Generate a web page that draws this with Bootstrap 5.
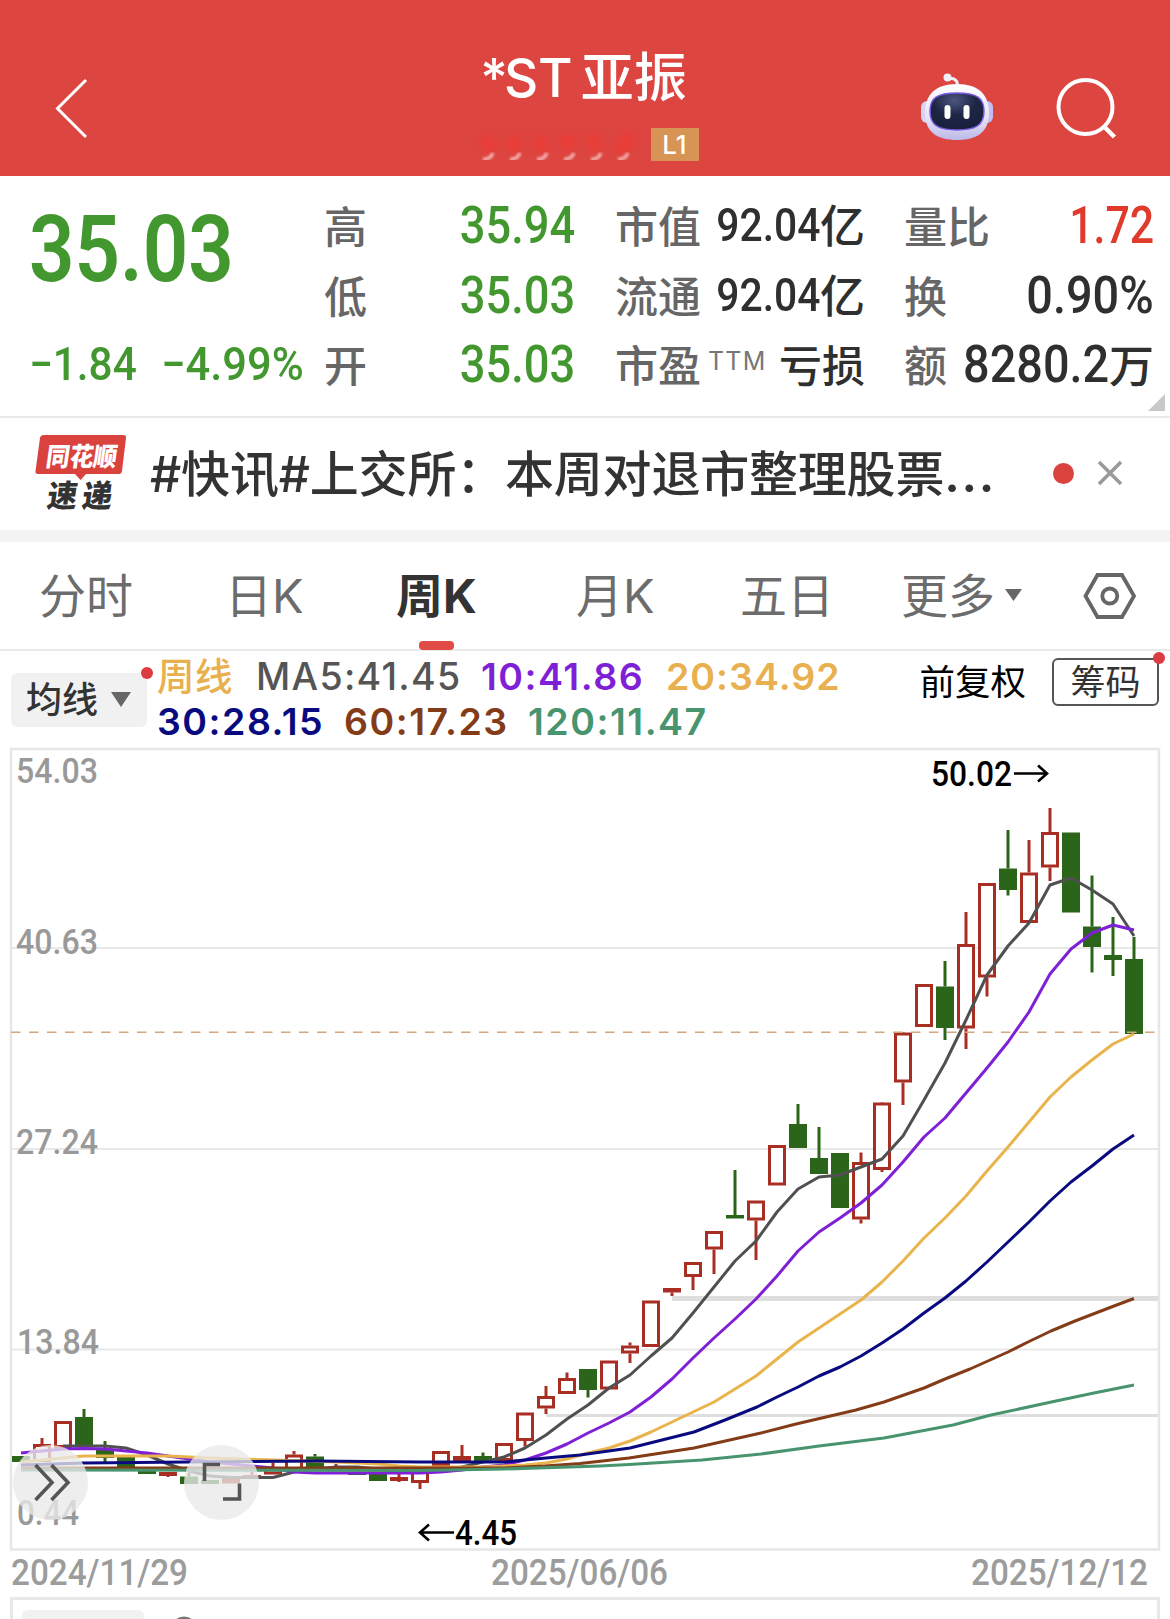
<!DOCTYPE html>
<html lang="zh-CN">
<head>
<meta charset="utf-8">
<meta name="viewport" content="width=device-width, initial-scale=1">
<title>*ST亚振</title>
<link href="https://cdn.jsdelivr.net/npm/bootstrap@5.3.0/dist/css/bootstrap.min.css" rel="stylesheet">
<style>
body{font-family:Inter,"Noto Sans CJK SC",sans-serif;background:#fff;color:#333;width:1170px;height:1619px;overflow:hidden;line-height:1}
svg{display:block;flex:none;overflow:visible}
.app-head{background:#dd4540;height:176px;color:#fff;padding:50px 53px 0 56px}
.side{width:290px;height:90px}
.stock-name{font-size:53px;font-weight:500;line-height:54px;white-space:nowrap;padding:1px 6px 0 0}
.star{letter-spacing:-4px}
.sub-row{margin-top:23px}
.lv{background:#d79454;width:48px;height:33px;font-size:26px;line-height:33px;font-weight:500}
.quote{height:242px;border-bottom:2px solid #eaeaea;position:relative;white-space:nowrap}
.quote .line{height:69.7px}
.num{font-family:Roboto,sans-serif;font-weight:500;display:inline-block;transform:scaleX(.887);transform-origin:100% 50%;font-size:51px;margin-bottom:3px}
.num.l{transform-origin:0 50%}
.num.s{font-size:46px}
.num.chg{transform:scaleX(.945)}
.num.chg1{transform:scaleX(.92)}
.num.wide{transform:scaleX(.918)}
.num.slim{transform:scaleX(.84)}
.num.big{font-size:92px;transform:scaleX(.866);margin-top:28px;font-weight:600}
.chg-row{margin-top:42px}
.up{color:#df3a2b}.down{color:#43972f}
.lab{font-size:43px;color:#666;font-weight:500;padding-top:1px}
.val{color:#2f2f2f;font-weight:500;font-size:45px}
.ttm{font-size:25px;color:#777;letter-spacing:1.2px;margin:-10px 0 0 7px}
.corner{position:absolute;right:5px;bottom:5px}
.news{height:112px;padding-left:36px}
.news-t{font-size:49px;font-weight:500;letter-spacing:-.2px;white-space:nowrap;width:870px;margin-left:22px}
.dots{letter-spacing:1.6px;font-weight:600}
.band{height:12px;background:#f4f4f4}
.tabs{height:109px;border-bottom:2px solid #eaeaea;color:#6c6c6c;font-size:47px;font-weight:400;padding-left:39px;white-space:nowrap}
.tabs .on{color:#333;font-weight:700;position:relative}
.tabs .on::after{content:"";position:absolute;left:23px;bottom:-26px;width:35px;height:9px;border-radius:4px;background:#e04c45}
.mabar{height:91px;padding:0 11px;white-space:nowrap}
.mabtn{width:136px;height:54px;border-radius:6px;background:#f1f1f1;font-size:36px;font-weight:500;margin-top:22px;padding-left:15px;position:relative}
.rdot{position:absolute;width:12px;height:12px;border-radius:50%;background:#dc3c40;right:-6px;top:-6px}
.mas{font-size:37.5px;font-weight:600;line-height:45px;margin:3px 0 0 10px;width:700px;letter-spacing:1.5px}
.adj{font-size:35.5px;color:#000;margin-top:14px}
.chip{width:107px;height:48px;border:2px solid #555;border-radius:6px;font-size:35px;margin-top:7px;position:relative}
.dates{height:45px;padding:5px 22px 0 11px}
.sub-pane{margin:0 10px;height:30px;border:3px solid #e8e8e8;border-bottom:0;padding:10px 0 0 9px;overflow:hidden}
.sub-pane i{display:block;width:122px;height:20px;background:#f1f1f1;border-radius:6px 6px 0 0}
.c1{width:324px;padding-left:29px}
.c2{width:251px}.c3{width:250px;margin-left:40px}.c4{width:250px;margin-left:39px}
</style>
</head>
<body>
<header class="app-head d-flex justify-content-between align-items-start">
  <div class="side"><svg width="34" height="90" viewBox="57 50 34 90" fill="none" stroke="#fff" stroke-width="3"><path d="M87 80 58.500 108.500 87 137"/></svg></div>
  <div class="d-flex flex-column align-items-center">
    <div class="stock-name"><span class="star">*</span>ST<span class="ms-2">亚振</span></div>
    <div class="sub-row d-flex align-items-start">
      <svg width="176" height="36" viewBox="475 125 176 36"><defs><filter id="bl" x="-20%" y="-20%" width="140%" height="140%"><feGaussianBlur stdDeviation="3"/></filter><filter id="b2"><feGaussianBlur stdDeviation=".8"/></filter></defs>
      <g filter="url(#bl)" stroke="#ec3a35" stroke-width="14" opacity=".75"><path d="M483 134l10 14M510 134l8 14M537 134l8 14M564 132l8 14M590 132l8 14M630 130l-10 20"/></g>
      <g filter="url(#b2)" stroke="#f2a9a9" stroke-width="3.500" fill="none"><path d="M483 156q7 1 10-6M510 156q7 1 10-6M537 156q7 1 10-6M564 156q7 1 10-6M591 156q7 1 10-6M618 156q7 1 10-6"/></g></svg>
      <div class="lv text-center">L1</div>
    </div>
  </div>
  <div class="side d-flex justify-content-end">
    <svg width="200" height="95" viewBox="916 50 200 95" fill="none">
      <defs><linearGradient id="rb" x1="0" y1="0" x2="0" y2="1"><stop offset="0" stop-color="#fff"/><stop offset=".6" stop-color="#e6e4f6"/><stop offset="1" stop-color="#bcb9ea"/></linearGradient>
      <radialGradient id="fc" cx=".45" cy=".2" r=".8"><stop offset="0" stop-color="#4d5680"/><stop offset=".5" stop-color="#1d2645"/><stop offset="1" stop-color="#18203c"/></radialGradient></defs>
      <circle cx="946.500" cy="77.500" r="4" fill="#f1eef8"/><path d="M947 79q9-2 9.500 6" stroke="#f1eef8" stroke-width="3"/>
      <rect x="920" y="101" width="12" height="22" rx="6" fill="#d6d3f3"/><rect x="980" y="101" width="12" height="22" rx="6" fill="#c3bdf0"/>
      <path d="M956 84c22 0 32 11 32 29 0 19-12 27-32 27s-32-8-32-27c0-18 10-29 32-29z" fill="url(#rb)"/>
      <path d="M956 93c20 0 27 5 27 18 0 14-8 19-27 19s-27-5-27-19c0-13 7-18 27-18z" fill="url(#fc)" stroke="#7b5be0" stroke-width="1.500"/>
      <rect x="943.500" y="105" width="6" height="14" rx="3" fill="#fff"/><rect x="962.500" y="105" width="6" height="14" rx="3" fill="#fff"/>
      <circle cx="1084.500" cy="107" r="27" stroke="#fff" stroke-width="4"/><path d="M1102.500 126l11 11" stroke="#fff" stroke-width="4.500"/>
    </svg>
  </div>
</header>

<section class="quote d-flex">
  <div class="c1 d-flex flex-column down">
    <span class="num l big">35.03</span>
    <div class="chg-row d-flex"><span class="num l s chg1" style="width:132px">−1.84</span><span class="num l s chg">−4.99%</span></div>
  </div>
  <div class="c2 pt-3">
    <div class="line d-flex justify-content-between align-items-center"><span class="lab">高</span><span class="num down">35.94</span></div>
    <div class="line d-flex justify-content-between align-items-center"><span class="lab">低</span><span class="num down">35.03</span></div>
    <div class="line d-flex justify-content-between align-items-center"><span class="lab">开</span><span class="num down">35.03</span></div>
  </div>
  <div class="c3 pt-3">
    <div class="line d-flex justify-content-between align-items-center"><span class="lab">市值</span><span class="val d-flex align-items-center"><span class="num s">92.04</span>亿</span></div>
    <div class="line d-flex justify-content-between align-items-center"><span class="lab">流通</span><span class="val d-flex align-items-center"><span class="num s">92.04</span>亿</span></div>
    <div class="line d-flex align-items-center"><span class="lab">市盈</span><span class="ttm">TTM</span><span class="val ms-auto" style="font-size:43px">亏损</span></div>
  </div>
  <div class="c4 pt-3">
    <div class="line d-flex justify-content-between align-items-center"><span class="lab">量比</span><span class="num up slim">1.72</span></div>
    <div class="line d-flex justify-content-between align-items-center"><span class="lab">换</span><span class="val"><span class="num wide">0.90%</span></span></div>
    <div class="line d-flex align-items-center"><span class="lab">额</span><span class="val d-flex align-items-center justify-content-end flex-grow-1" style="width:0"><span class="num wide">8280.2</span>万</span></div>
  </div>
  <svg class="corner" width="17" height="17"><path d="M17 0V17H0z" fill="#c8c8c8"/></svg>
</section>

<section class="news d-flex align-items-center">
  <svg width="92" height="80" viewBox="36 434 92 80" font-family="'Noto Sans CJK SC'" font-weight="900">
    <path d="M44 435H123q3.500 0 3 3L122 471q-.5 3-3 3H86l-5.500 6-5.500-6H38q-3 0-2.500-3L40 438q.5-3 4-3z" fill="#d9423d"/>
    <text transform="translate(45 465.500) skewX(-8)" font-size="26" textLength="71" lengthAdjust="spacingAndGlyphs" fill="#fff">同花顺</text>
    <text transform="translate(46 506.500) skewX(-8)" font-size="31" fill="#333"><tspan textLength="30" lengthAdjust="spacingAndGlyphs">速</tspan><tspan x="35" textLength="30" lengthAdjust="spacingAndGlyphs">递</tspan></text>
  </svg>
  <div class="news-t">#快讯#上交所：本周对退市整理股票<span class="dots">...</span></div>
  <svg class="ms-auto" width="118" height="30" viewBox="1052 459.500 118 30"><circle cx="1063.500" cy="474" r="10.500" fill="#d9423d"/><path d="M1099 462.500l22 22M1121 462.500l-22 22" stroke="#999" stroke-width="3.500"/></svg>
</section>
<div class="band"></div>

<nav class="tabs d-flex align-items-center">
  <span style="width:186px">分时</span><span style="width:171px">日K</span><span style="width:180px"><span class="on">周K</span></span><span style="width:164px">月K</span><span style="width:161px">五日</span><span>更多</span>
  <svg style="margin-left:9px" width="19" height="13"><path d="M1 0h17L9.500 12z" fill="#666"/></svg>
  <svg style="margin-left:60px" width="54" height="50" viewBox="1083 571 54 50" fill="none" stroke="#666" stroke-width="3.800"><path d="M1085.500 596 1097.500 575H1122L1134 596 1122 617H1097.500z"/><circle cx="1109.800" cy="596" r="7.500"/></svg>
</nav>

<section class="mabar d-flex align-items-start">
  <div class="mabtn d-flex align-items-center">均线<svg style="margin-left:12px" width="22" height="16"><path d="M1 0h20L11 15z" fill="#666"/></svg><span class="rdot"></span></div>
  <div class="mas">
    <div class="d-flex"><span style="color:#e8b04f;width:99px;letter-spacing:.5px;font-weight:500">周线</span><span style="color:#555;width:225px;font-weight:500;letter-spacing:1.3px">MA5:41.45</span><span style="color:#7f1fd6;width:185px">10:41.86</span><span style="color:#e8b04f;letter-spacing:1px">20:34.92</span></div>
    <div class="d-flex"><span style="color:#0a0a80;width:187px">30:28.15</span><span style="color:#833c17;width:184px">60:17.23</span><span style="color:#48946f">120:11.47</span></div>
  </div>
  <span class="adj ms-auto">前复权</span>
  <div class="chip d-flex align-items-center justify-content-center" style="margin-left:26px">筹码<span class="rdot" style="right:-8px;top:-8px"></span></div>
</section>

<svg id="chart" width="1170" height="810" viewBox="0 742 1170 810"></svg>

<div class="dates d-flex justify-content-between"><span class="dt">2024/11/29</span><span class="dt">2025/06/06</span><span class="dt">2025/12/12</span></div>
<div class="sub-pane d-flex"><i></i><svg style="margin-left:26px" width="28" height="20"><circle cx="14" cy="20" r="12" fill="none" stroke="#777" stroke-width="3"/></svg></div>

<script src="https://cdn.jsdelivr.net/npm/bootstrap@5.3.0/dist/js/bootstrap.bundle.min.js"></script>
<script>
// Weekly candles: kind (r rising, g falling, f thin rising), body top, body bottom, wick top, wick bottom
var K=`g 1456 1462|r 1444 1462 1438|r 1421 1448|g 1417 1447 1409|g 1450 1458 1441 1462|g 1455 1470|g 1470 1474|f 1472 1476 1472 1477|g 1476.5 1484 1473|g 1480 1484|r 1477.5 1483.5|f 1475 1479 1472|r 1467 1474.5 1463|r 1454.5 1470 1451|g 1456.5 1469 1454|f 1467 1469 1464|g 1472 1475|g 1474 1481|f 1477 1481 1473 1482|r 1467.5 1483 1467.5 1489|r 1451 1466|r 1456 1461 1445|g 1456 1462 1452.5|r 1443 1461|r 1412.5 1441 1412.5 1446.5|r 1396 1408.5 1386 1414|r 1378 1394 1372.5|g 1369 1390 1369 1397.5|r 1360.5 1389.5|r 1345.5 1353.5 1342.5 1363|r 1300.5 1347|f 1288 1292.5 1288 1296|r 1262 1277 1262 1290|r 1231 1249.5 1231 1274|g 1215 1218.5 1170|r 1200.5 1220.5 1200.5 1260|r 1145 1185.5|g 1124 1148 1104|g 1158 1174 1127|g 1153 1208|r 1162 1219.5 1152.5 1223.5|r 1102.5 1170 1102 1172|r 1032.5 1082.5 1032 1105|r 984 1027|g 986.5 1028 961 1040|r 944 1028.5 912 1049|r 883 977.5 883 996.5|g 868.5 890 830 895.5|r 872.5 923 840|r 832 867.5 808 881|g 832.5 912.5|g 926.5 947 875.5 972.5|g 955 960 917 976|g 959 1034 937`.split('|');
var s='<g fill="none" stroke="#e8e8e8" stroke-width="2"><path d="M11 948H1159M11 1149H1159M11 1349.500H1159"/></g><g stroke="#dedede"><path d="M672 1298.500H1159" stroke-width="5"/><path d="M546 1415.500H1159" stroke-width="3"/></g>';
s+='<rect x="11" y="749" width="1148" height="800.500" fill="none" stroke="#e6e6e6" stroke-width="2.500"/>';
function T(x,y,w,t,c,wt,fs){return '<text x="'+x+'" y="'+y+'" textLength="'+w+'" lengthAdjust="spacingAndGlyphs" font-family="Roboto" font-size="'+(fs||35)+'" font-weight="'+(wt||500)+'" fill="'+(c||'#999')+'">'+t+'</text>'}
s+=T(16,783,82,'54.03')+T(16,954,82,'40.63')+T(16,1154,82,'27.24')+T(17,1354,82,'13.84')+T(17,1524.5,62,'0.44');
K.forEach(function(k,i){var p=k.split(' '),x=21+21*i,a=+p[1],b=+p[2],t=p[3]?+p[3]:a,d=p[4]?+p[4]:b,r=p[0]!='g',c=r?'#a82e24':'#2b651a';
if(t<a)s+='<path d="M'+x+' '+t+'V'+a+'" stroke="'+c+'" stroke-width="3"/>';
if(d>b)s+='<path d="M'+x+' '+b+'V'+d+'" stroke="'+c+'" stroke-width="3"/>';
if(p[0]=='r')s+='<rect x="'+(x-7.5)+'" y="'+(a+1.5)+'" width="15" height="'+(b-a-3)+'" fill="#fff" stroke="'+c+'" stroke-width="3"/>';
else s+='<rect x="'+(x-9)+'" y="'+a+'" width="18" height="'+(b-a)+'" fill="'+c+'"/>'});
s+='<path d="M11 1032.300H1159" stroke="#d3a67c" stroke-width="1.500" stroke-dasharray="9.500 8.500"/>';
// Moving averages
[['#505050','63 1446 84 1446 105 1446 126 1448 147 1455 168 1464 189 1471 210 1476 231 1477.5 252 1477.5 273 1477.5 294 1472 315 1469 336 1467 357 1467 378 1469 399 1471 420 1472 441 1471 462 1467 483 1462 504 1457 525 1448 546 1435 567 1419 588 1405 609 1388 630 1375 651 1356 672 1338 693 1313 714 1287 735 1261 756 1241 777 1212 798 1189 819 1177 840 1175 861 1167 882 1159 903 1136 924 1100 945 1063 966 1020 987 975 1008 946 1029 923 1050 885 1071 878 1092 890 1113 904 1134 936'],
['#7f1fd6','21 1453 42 1451 63 1449 84 1448.5 105 1449 126 1451 147 1453 168 1456 189 1459 210 1462 231 1464 252 1466 273 1468 294 1472 315 1473 420 1473 441 1472 462 1470 483 1467 504 1465 525 1460 546 1453 567 1444 588 1433 609 1423 630 1412 651 1397 672 1379 693 1358 714 1338 735 1319 756 1299 777 1276 798 1251 819 1232 840 1218 861 1203 882 1185 903 1162 924 1137 945 1118 966 1093 987 1068 1008 1042 1029 1012 1050 974 1071 949 1092 933 1113 925 1134 930'],
['#e9b44c','21 1462 42 1460 63 1458 84 1456 168 1456 210 1458 273 1460 336 1462 378 1464 399 1466 420 1467 483 1467 504 1466 525 1465 546 1463 567 1459 588 1453 609 1448 630 1441 651 1432 672 1422 693 1412 714 1402 735 1389 756 1376 777 1359 798 1342 819 1328 840 1314 861 1300 882 1282 903 1261 924 1238 945 1218 966 1196 987 1171 1008 1147 1029 1122 1050 1097 1071 1077 1092 1060 1113 1044 1134 1034'],
['#0a0a80','21 1465 84 1463 189 1462 315 1461 420 1462 504 1462 525 1460 546 1458 580 1455 630 1448 694 1432 725 1420 757 1407 777 1397 798 1387 819 1376 840 1367 861 1356 882 1343 903 1329 924 1313 945 1298 966 1281 987 1262 1008 1242 1029 1222 1050 1201 1071 1182 1092 1166 1113 1149 1134 1135'],
['#833c17','21 1468 504 1468 545 1466 580 1463.500 629 1458 694 1448 761 1433 796 1424 826 1417 856 1410 884 1402 924 1388 945 1379 970 1369 1008 1352 1028 1342 1051 1331 1075 1321 1114 1306 1134 1298.5'],
['#48946f','21 1470 420 1470.5 504 1469 600 1466 629 1464.5 702 1460 761 1454 819 1446 884 1438 953 1425 991 1415 1056 1401 1094 1393 1134 1385']].forEach(function(l){s+='<polyline points="'+l[1]+'" fill="none" stroke="'+l[0]+'" stroke-width="3" stroke-linejoin="round"/>'});
s+=T(931,785.5,81,'50.02','#000')+'<path d="M1014 773.500H1046M1038 765.500 1047 773.500 1038 781.500" stroke="#000" stroke-width="2.600" fill="none"/>';
s+=T(455,1545,62,'4.45','#000')+'<path d="M454 1532.500H421M429 1524.500 420 1532.500 429 1540.500" stroke="#000" stroke-width="2.600" fill="none"/>';
s+='<g fill="#e9e9e9" fill-opacity=".78"><circle cx="50.500" cy="1482.500" r="37.500"/><circle cx="221.500" cy="1482.500" r="37.500"/></g>';
s+='<g fill="none" stroke="#555" stroke-width="3.600"><path d="M35.500 1465 52 1482.500 35.500 1500M51.500 1465 68 1482.500 51.500 1500M220 1464.500H204.500V1481M239.500 1483.500V1499H223"/></g>';
document.getElementById('chart').innerHTML=s;
document.querySelectorAll('.dt').forEach(function(e){var t=e.textContent;e.innerHTML='<svg width="177" height="40">'+T(0,28,177,t,'#9c9c9c',500,36)+'</svg>'});
</script>
</body>
</html>
